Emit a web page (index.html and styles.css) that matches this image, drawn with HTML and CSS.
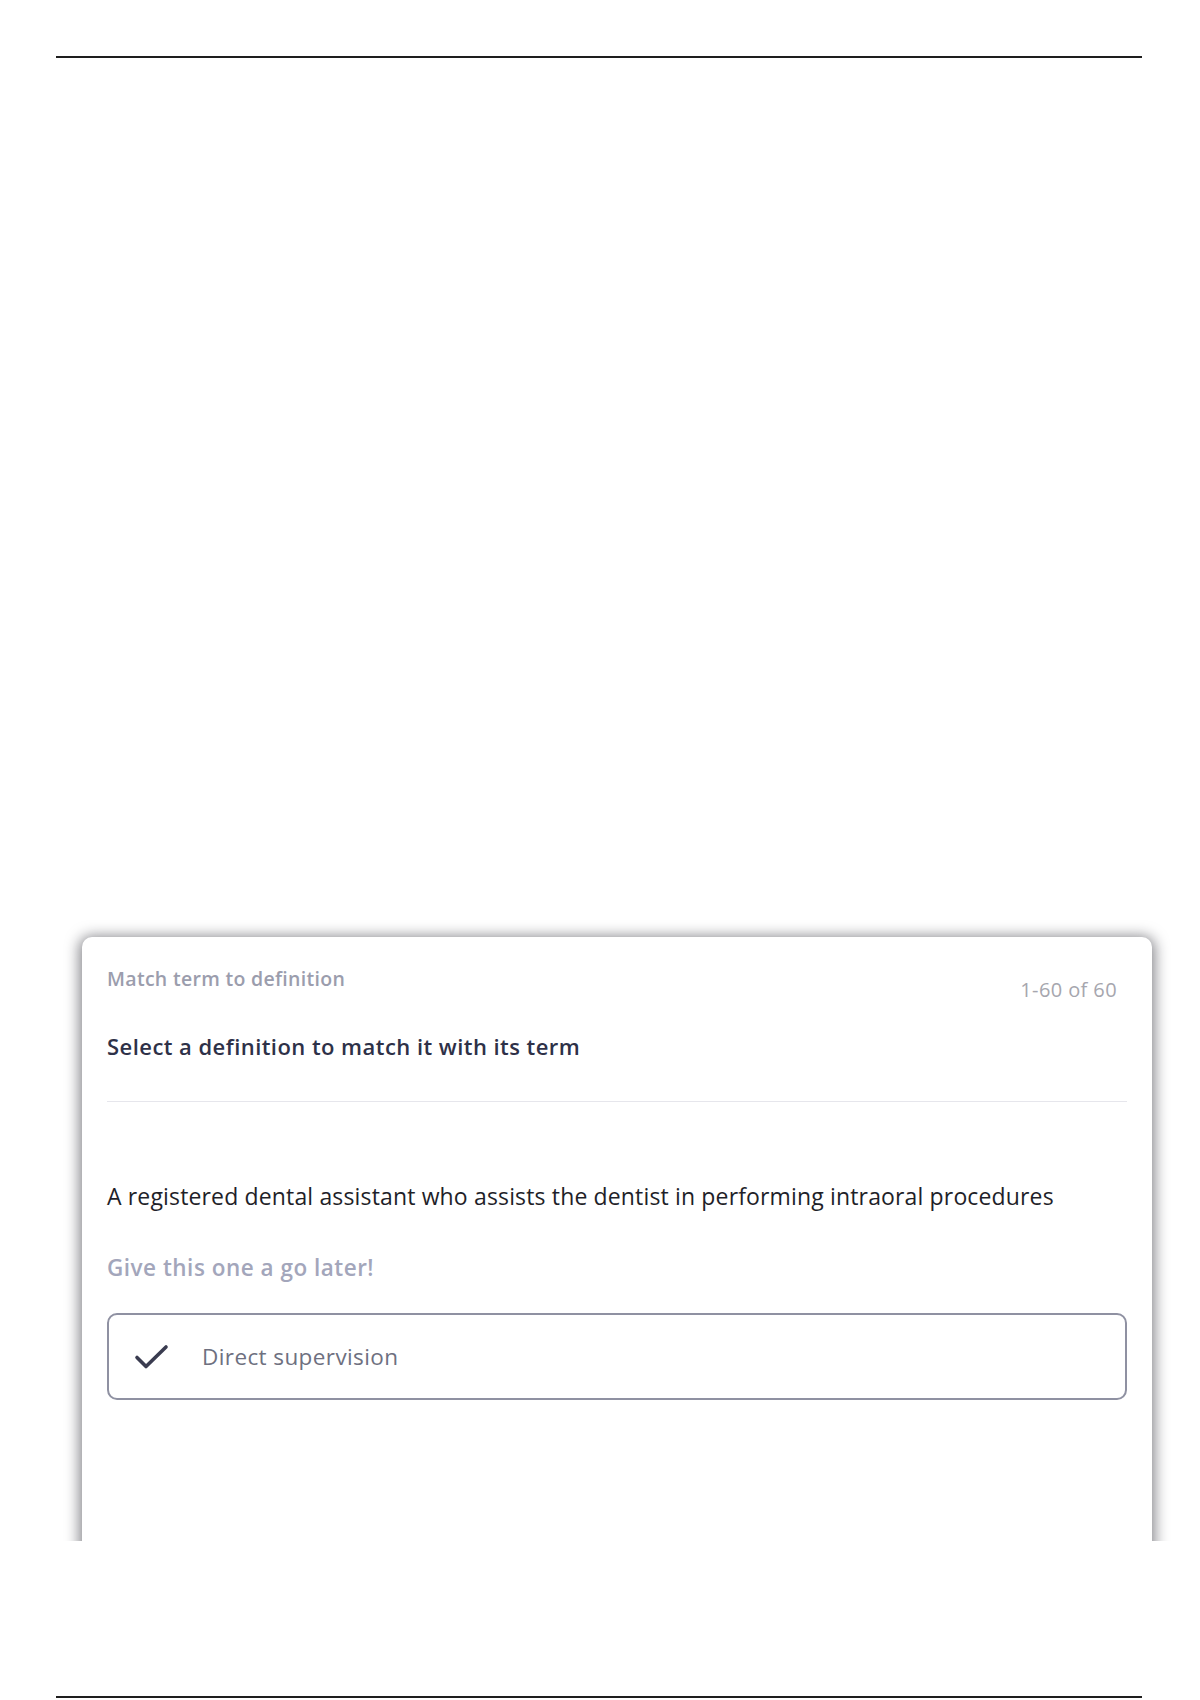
FILE: index.html
```html
<!DOCTYPE html>
<html lang="en">
<head>
<meta charset="utf-8">
<title>Match term to definition</title>
<link rel="stylesheet" href="styles.css">
</head>
<body>
<div class="page">
  <div class="rule"></div>
  <div class="clip">
    <section class="card">
      <div class="card-head">
        <div class="label">Match term to definition</div>
        <div class="count">1-60 of 60</div>
      </div>
      <h2 class="title">Select a definition to match it with its term</h2>
      <div class="sep"></div>
      <p class="definition">A registered dental assistant who assists the dentist in performing intraoral procedures</p>
      <p class="later">Give this one a go later!</p>
      <div class="option">
        <svg class="check" width="35" height="26" viewBox="0 0 35 26" aria-hidden="true">
          <path d="M3 13.5 L12 22.5 L32 3" fill="none" stroke="#3a3c50" stroke-width="3.6" stroke-linecap="round" stroke-linejoin="round"/>
        </svg>
        <span class="option-text">Direct supervision</span>
      </div>
    </section>
  </div>
  <div class="rule bottom"></div>
</div>
</body>
</html>
```

FILE: styles.css
```css
html, body {
  margin: 0;
  padding: 0;
  background: #ffffff;
}

.page {
  box-sizing: border-box;
  width: 1200px;
  height: 1700px;
  padding: 56px 58px 2px 56px;
  display: flex;
  flex-direction: column;
  font-family: "Open Sans", "Noto Sans", sans-serif;
}

.rule {
  height: 2px;
  background: #1e1e1e;
  flex: none;
}

.rule.bottom {
  margin-top: auto;
}

.clip {
  box-sizing: border-box;
  width: 1120px;
  height: 626px;
  margin-top: 857px;
  padding: 22px 0 0 26px;
  overflow: hidden;
  flex: none;
}

.card {
  box-sizing: border-box;
  width: 1070px;
  height: 760px;
  background: #fff;
  border-radius: 10px;
  box-shadow: 0 2px 14px 3px rgba(20, 20, 30, 0.5);
  padding: 30px 25px 0 25px;
}

.card-head {
  display: flex;
  justify-content: space-between;
  align-items: flex-start;
  height: 24px;
}

.label {
  font-size: 19.5px;
  line-height: 24px;
  font-weight: 600;
  letter-spacing: 0.3px;
  color: #9b9dad;
}

.count {
  margin-top: 11px;
  padding-right: 10px;
  font-size: 20px;
  line-height: 24px;
  letter-spacing: 0.4px;
  color: #a6a6ae;
}

.title {
  margin: 42px 0 0;
  font-size: 22px;
  line-height: 26px;
  font-weight: 600;
  letter-spacing: 0.45px;
  color: #2e3148;
}

.sep {
  margin-top: 42px;
  height: 1px;
  background: #e6e6ec;
}

.definition {
  margin: 79px 0 0;
  font-size: 23px;
  line-height: 30px;
  letter-spacing: 0.15px;
  color: #1f1f29;
}

.later {
  margin: 44px 0 0;
  font-size: 22.5px;
  line-height: 26px;
  font-weight: 600;
  letter-spacing: 0.5px;
  color: #a3a6bb;
}

.option {
  box-sizing: border-box;
  margin-top: 32px;
  height: 87px;
  border: 2px solid #8f91a2;
  border-radius: 10px;
  display: flex;
  align-items: center;
  padding-left: 25px;
  gap: 33px;
}

.check {
  flex: none;
}

.option-text {
  font-size: 22.5px;
  letter-spacing: 0.4px;
  color: #6e7080;
}
```
